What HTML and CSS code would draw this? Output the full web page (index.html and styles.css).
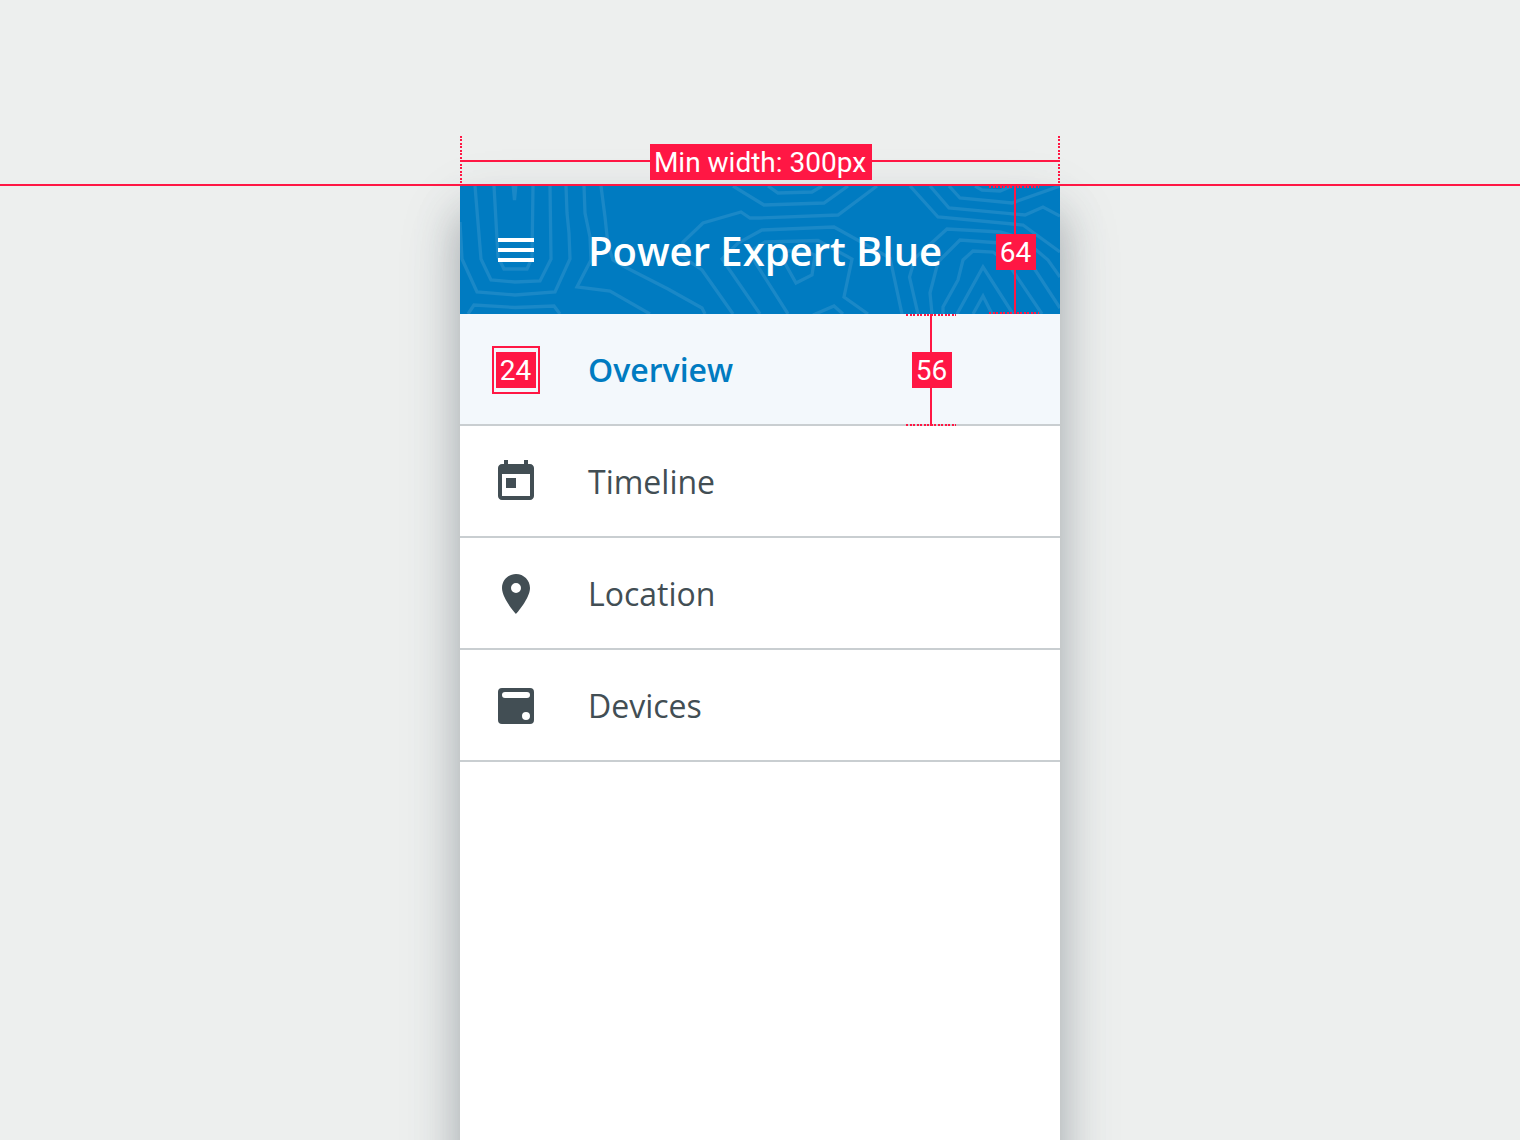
FILE: index.html
```
<!DOCTYPE html>
<html lang="en">
<head>
<meta charset="utf-8">
<title>Navigation drawer</title>
<link rel="stylesheet" href="styles.css">
</head>
<body>
<main class="stage">
  <nav class="drawer">
    <header class="drawer-header">
      <svg class="contours" viewBox="460 186 600 128" aria-hidden="true">
        <path d="M460 222L462 259L477 292L515 295L555 292L570 259L569 233L567 213L566 186"/>
        <path d="M475 186L481 259L491 280L515 282L540 281L551 259L550 186"/>
        <path d="M494 186L498 257L504 269H527L532 258L533 186"/>
        <path d="M513 184L514.500 200L516 184"/>
        <path d="M584 186L585 213L590 237L591 260L577 287L610 291L650 314"/>
        <path d="M601 186L605 217L608 245L613 260L625 267L668 289L702 308L705 314"/>
        <path d="M468 314L474 305L515 307.500L554 306L560 314"/>
        <path d="M733 186L764 205L824 203L848 186"/>
        <path d="M733 314L702 270L680 255L683 242L703 223L741 212L750 218H760L838 215L877 186"/>
        <path d="M760 314L722 259L738 243L762 230L834 227L890 258L902 314"/>
        <path d="M788 314L755 262L752 250L765 242L818 240.500L852 259L844 297L868 314"/>
        <path d="M782 258L796 283L812 275L815 255L804 251H786Z"/>
        <path d="M813 315L834 306L843 314"/>
        <path d="M768 186L778 193L812 192L822 186"/>
        <path d="M910 186L938 217L1023 225L1060 252"/>
        <path d="M930 186L949 208L1025 215L1043 207L1060 216"/>
        <path d="M949 186L960 198L1012 203L1060 186"/>
        <path d="M975 186L982 190L1000 191L1012 186"/>
        <path d="M918 314L909.500 277L915 258L947 229L1000 232L1022 238L1048 260L1060 277"/>
        <path d="M932 314L930 293L938 262L960 240L1000 243L1015 248L1030 262L1060 308"/>
        <path d="M943 314V307L958 280L963 260L973 251L993 252L1007 262L1042 314"/>
        <path d="M957 314L983 267L1013 314"/>
        <path d="M973 314L983 296L992 314"/>
      </svg>
      <svg class="icon" viewBox="0 0 24 24"><path d="M3 18h18v-2H3v2zm0-5h18v-2H3v2zm0-7v2h18V6H3z"/></svg>
      <h1 class="title">Power Expert Blue</h1>
    </header>
    <ul class="menu">
      <li class="item item-active">
        <span class="icon size-box"><span class="tag">24</span></span>
        <span class="label">Overview</span>
      </li>
      <li class="item">
        <svg class="icon" viewBox="0 0 24 24"><path fill-rule="evenodd" d="M19 3h-1V1h-2v2H8V1H6v2H5c-1.110 0-2 .9-2 2v14c0 1.100.89 2 2 2h14c1.100 0 2-.9 2-2V5c0-1.100-.9-2-2-2zm0 16H5V8h14v11zM7 10h5v5H7z"/></svg>
        <span class="label">Timeline</span>
      </li>
      <li class="item">
        <svg class="icon" viewBox="0 0 24 24"><path d="M12 2C8.130 2 5 5.130 5 9c0 5.250 7 13 7 13s7-7.750 7-13c0-3.870-3.130-7-7-7zm0 9.500a2.500 2.500 0 0 1 0-5 2.500 2.500 0 0 1 0 5z"/></svg>
        <span class="label">Location</span>
      </li>
      <li class="item">
        <svg class="icon" viewBox="0 0 24 24"><path fill-rule="evenodd" d="M5 3h14a2 2 0 0 1 2 2v14a2 2 0 0 1-2 2H5a2 2 0 0 1-2-2V5a2 2 0 0 1 2-2zM6.500 5a1.500 1.500 0 0 0 0 3h11a1.500 1.500 0 0 0 0-3zM17 15a2 2 0 1 0 0 4 2 2 0 0 0 0-4z"/></svg>
        <span class="label">Devices</span>
      </li>
    </ul>
  </nav>
  <div class="baseline"></div>
  <div class="measure measure-width"><span class="tag">Min width: 300px</span></div>
  <div class="measure measure-height measure-header"><span class="tag">64</span></div>
  <div class="measure measure-height measure-item"><span class="tag">56</span></div>
</main>
</body>
</html>
```
FILE: styles.css
```
* { box-sizing: border-box; }

body {
  margin: 0;
  background: #edefee;
  font-family: "Open Sans", sans-serif;
  color: #424e54;
}

.stage {
  position: relative;
  height: 1140px;
  padding-top: 186px;
  overflow: hidden;
}

.drawer {
  width: 600px;
  height: 1100px;
  margin: 0 auto;
  background: #fff;
  box-shadow:
    0 30px 38px 0 rgba(66, 78, 84, 0.34),
    0 24px 60px 0 rgba(66, 78, 100, 0.16);
}

.drawer-header,
.item {
  display: flex;
  align-items: center;
  gap: 48px;
  padding-left: 32px;
}

.drawer-header {
  position: relative;
  height: 128px;
  background: #007bc1;
  color: #fff;
}

.contours {
  position: absolute;
  inset: 0;
  width: 600px;
  height: 128px;
  fill: none;
  stroke: #fff;
  stroke-opacity: 0.1;
  stroke-width: 3.3;
}

.icon {
  position: relative;
  flex: none;
  width: 48px;
  height: 48px;
  fill: currentColor;
}

.title {
  position: relative;
  margin: 0;
  padding-top: 2px;
  font-size: 40px;
  line-height: 54px;
  font-weight: 600;
}

.menu {
  margin: 0;
  padding: 0;
  list-style: none;
}

.item {
  height: 112px;
  padding-top: 2px;
  border-bottom: 2px solid #c9ced1;
}

.label {
  font-size: 32px;
  line-height: 44px;
}

.item-active {
  background: #f3f8fc;
  color: #007bc1;
  font-weight: 600;
}

.size-box {
  display: flex;
  align-items: center;
  justify-content: center;
  border: 2px solid #ff1744;
}

.tag {
  display: flex;
  justify-content: center;
  flex: none;
  height: 36px;
  min-width: 40px;
  padding-right: 1px;
  background: #ff1744;
  color: #fff;
  font: 400 28px/37px Roboto, sans-serif;
}

.baseline {
  position: absolute;
  top: 184px;
  left: 0;
  right: 0;
  height: 2px;
  background: #ff1744;
}

.measure {
  position: absolute;
  display: flex;
  align-items: center;
  justify-content: center;
}

.measure-width {
  top: 136px;
  left: 460px;
  width: 600px;
  height: 48px;
  padding: 4px 0 0 2px;
  background:
    linear-gradient(#ff1744, #ff1744) 0 24px / 100% 2px no-repeat,
    repeating-linear-gradient(#ff1744 0 2px, transparent 2px 3.500px) 0 0 / 2px 100% no-repeat,
    repeating-linear-gradient(#ff1744 0 2px, transparent 2px 3.500px) 100% 0 / 2px 100% no-repeat;
}

.measure-width .tag {
  width: 222px;
  padding-right: 2px;
}

.measure-height {
  width: 50px;
  background:
    linear-gradient(#ff1744, #ff1744) 25px 0 / 2px 100% no-repeat,
    repeating-linear-gradient(90deg, #ff1744 0 2px, transparent 2px 3.500px) 0 0 / 100% 2px no-repeat,
    repeating-linear-gradient(90deg, #ff1744 0 2px, transparent 2px 3.500px) 0 100% / 100% 2px no-repeat;
}

.measure-header {
  top: 186px;
  left: 989px;
  height: 128px;
  padding: 4px 0 0 4px;
}

.measure-item {
  top: 314px;
  left: 906px;
  height: 112px;
  padding-left: 2px;
  background-position: 24px 0, 0 0, 0 100%;
}
```
